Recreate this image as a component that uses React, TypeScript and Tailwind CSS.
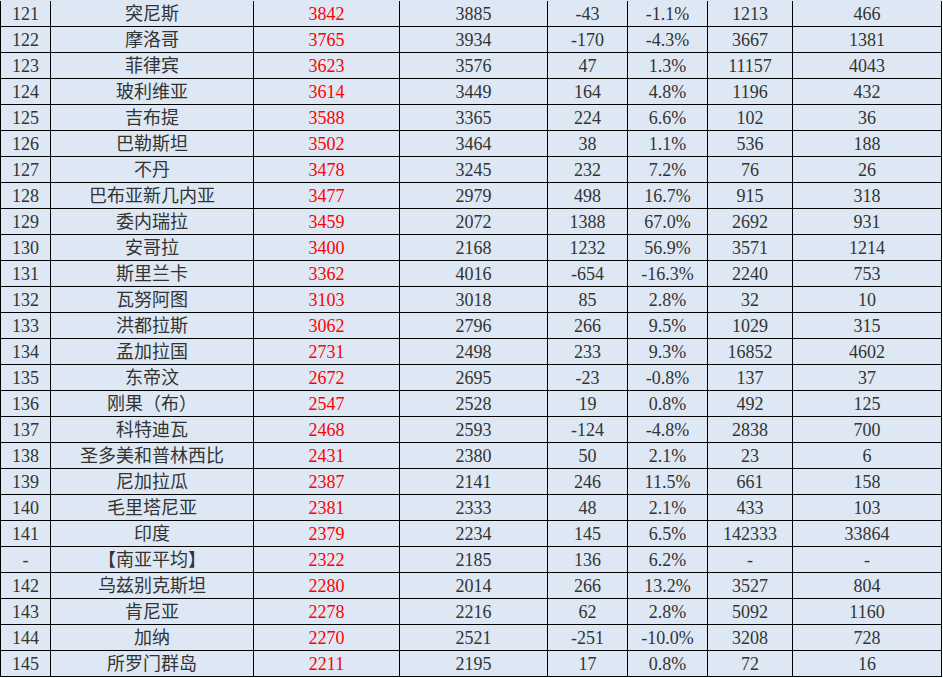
const ROWS: string[][] = [
  ["121", "突尼斯", "3842", "3885", "-43", "-1.1%", "1213", "466"],
  ["122", "摩洛哥", "3765", "3934", "-170", "-4.3%", "3667", "1381"],
  ["123", "菲律宾", "3623", "3576", "47", "1.3%", "11157", "4043"],
  ["124", "玻利维亚", "3614", "3449", "164", "4.8%", "1196", "432"],
  ["125", "吉布提", "3588", "3365", "224", "6.6%", "102", "36"],
  ["126", "巴勒斯坦", "3502", "3464", "38", "1.1%", "536", "188"],
  ["127", "不丹", "3478", "3245", "232", "7.2%", "76", "26"],
  ["128", "巴布亚新几内亚", "3477", "2979", "498", "16.7%", "915", "318"],
  ["129", "委内瑞拉", "3459", "2072", "1388", "67.0%", "2692", "931"],
  ["130", "安哥拉", "3400", "2168", "1232", "56.9%", "3571", "1214"],
  ["131", "斯里兰卡", "3362", "4016", "-654", "-16.3%", "2240", "753"],
  ["132", "瓦努阿图", "3103", "3018", "85", "2.8%", "32", "10"],
  ["133", "洪都拉斯", "3062", "2796", "266", "9.5%", "1029", "315"],
  ["134", "孟加拉国", "2731", "2498", "233", "9.3%", "16852", "4602"],
  ["135", "东帝汶", "2672", "2695", "-23", "-0.8%", "137", "37"],
  ["136", "刚果（布）", "2547", "2528", "19", "0.8%", "492", "125"],
  ["137", "科特迪瓦", "2468", "2593", "-124", "-4.8%", "2838", "700"],
  ["138", "圣多美和普林西比", "2431", "2380", "50", "2.1%", "23", "6"],
  ["139", "尼加拉瓜", "2387", "2141", "246", "11.5%", "661", "158"],
  ["140", "毛里塔尼亚", "2381", "2333", "48", "2.1%", "433", "103"],
  ["141", "印度", "2379", "2234", "145", "6.5%", "142333", "33864"],
  ["-", "【南亚平均】", "2322", "2185", "136", "6.2%", "-", "-"],
  ["142", "乌兹别克斯坦", "2280", "2014", "266", "13.2%", "3527", "804"],
  ["143", "肯尼亚", "2278", "2216", "62", "2.8%", "5092", "1160"],
  ["144", "加纳", "2270", "2521", "-251", "-10.0%", "3208", "728"],
  ["145", "所罗门群岛", "2211", "2195", "17", "0.8%", "72", "16"],
];

// widths include the right border of each cell
const COLS = [
  "w-[51px] border-l",
  "w-[203px]",
  "w-[146px] text-[#ff0000]",
  "w-[148px]",
  "w-[80px]",
  "w-[80px]",
  "w-[85px]",
  "w-[149px]",
];

export default function App() {
  return (
    <div
      className="w-[942px] bg-[#dde8f4] pt-px text-[18px] leading-none text-[#333333]"
      style={{ fontFamily: '"Liberation Serif", "Noto Sans CJK SC", serif' }}
    >
      {ROWS.map((row, i) => (
        <div key={i} className="flex h-[26px] border-b border-black">
          {row.map((cell, j) => (
            <div
              key={j}
              className={`${COLS[j]} flex shrink-0 items-center justify-center border-r border-black`}
            >
              {cell}
            </div>
          ))}
        </div>
      ))}
    </div>
  );
}
